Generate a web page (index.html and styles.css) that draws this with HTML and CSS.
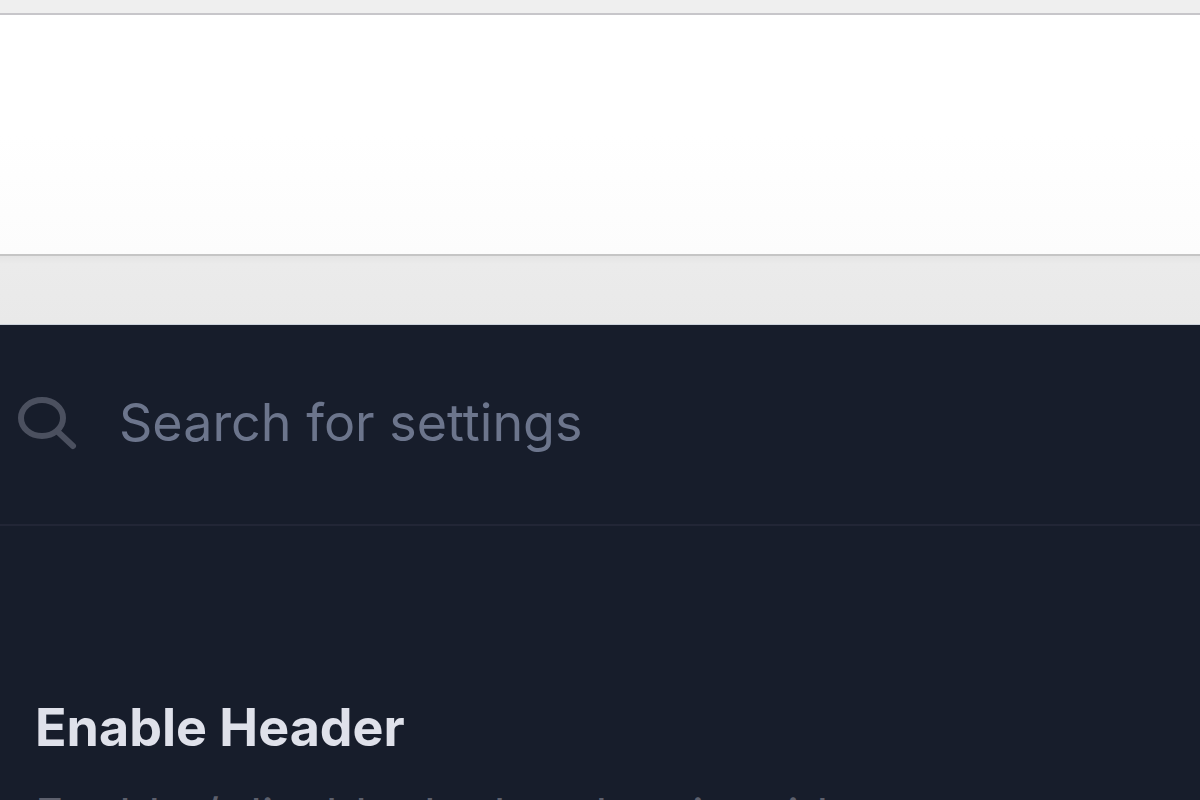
FILE: index.html
```html
<!DOCTYPE html>
<html lang="en">
<head>
<meta charset="utf-8">
<title>Settings</title>
<link rel="stylesheet" href="styles.css">
</head>
<body>
<header class="browser-bar"></header>
<div class="toolbar"></div>
<div class="bar-shadow"></div>
<main class="panel">
  <label class="search">
    <svg class="search-icon" viewBox="0 0 60 56" aria-hidden="true"><ellipse cx="24" cy="23" rx="21" ry="18"/><path d="M39 36 55 51"/></svg>
    <input class="search-input" type="search" placeholder="Search for settings" aria-label="Search for settings">
  </label>
  <section class="setting">
    <h2 class="setting-title">Enable Header</h2>
    <p class="setting-text">Enable / disable the header site video</p>
  </section>
</main>
</body>
</html>
```

FILE: styles.css
```css
* { box-sizing: border-box; }
body {
  margin: 0;
  min-height: 100vh;
  display: flex;
  flex-direction: column;
  overflow: hidden;
  background: #171d2b;
  font-family: Inter, sans-serif;
}
.browser-bar { height: 15px; background: #efefef; border-bottom: 2px solid #c7c6ca; }
.toolbar { height: 241px; background: linear-gradient(#ffffff 50%, #fcfcfc); border-bottom: 2px solid #c5c5c5; }
.bar-shadow { height: 69px; background: linear-gradient(#e4e4e4, #ebebeb 8px, #e9e9e9); border-bottom: 1px solid #ccd2da; }
.panel { background: #171d2b; height: calc(100vh - 325px); overflow: hidden; }
.search {
  display: flex;
  align-items: center;
  gap: 41px;
  height: 201px;
  padding: 0 18px 4px;
  border-bottom: 2px solid #222636;
}
.search-icon { width: 60px; height: 56px; fill: none; stroke: #4b505f; stroke-width: 6; stroke-linecap: round; }
.search-input {
  flex: 1;
  min-width: 0;
  padding: 0;
  border: 0;
  outline: 0;
  background: transparent;
  color: #dfe1ea;
  font: 400 52px/60px Inter, sans-serif;
}
.search-input::placeholder { color: #6c758c; opacity: 1; }
.setting { padding: 170px 35px 0; }
.setting-title { margin: 0; color: #dfe1ea; font-size: 52px; line-height: 64px; font-weight: 700; }
.setting-text { margin: 26px 0 0; color: #5d606d; font-size: 48px; line-height: 60px; white-space: nowrap; }
```
